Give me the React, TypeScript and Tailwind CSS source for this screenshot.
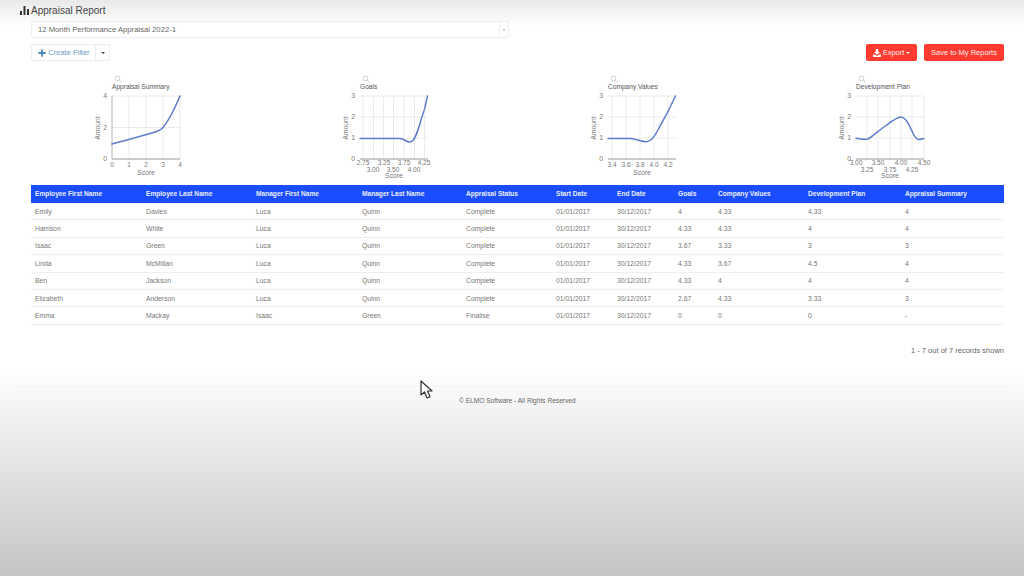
import React from 'react';
import { Plus } from 'lucide-react';

const rows = [
  ['Emily', 'Davies', 'Luca', 'Quinn', 'Complete', '01/01/2017', '30/12/2017', '4', '4.33', '4.33', '4'],
  ['Harrison', 'White', 'Luca', 'Quinn', 'Complete', '01/01/2017', '30/12/2017', '4.33', '4.33', '4', '4'],
  ['Isaac', 'Green', 'Luca', 'Quinn', 'Complete', '01/01/2017', '30/12/2017', '3.67', '3.33', '3', '3'],
  ['Linda', 'McMillan', 'Luca', 'Quinn', 'Complete', '01/01/2017', '30/12/2017', '4.33', '3.67', '4.5', '4'],
  ['Ben', 'Jackson', 'Luca', 'Quinn', 'Complete', '01/01/2017', '30/12/2017', '4.33', '4', '4', '4'],
  ['Elizabeth', 'Anderson', 'Luca', 'Quinn', 'Complete', '01/01/2017', '30/12/2017', '2.67', '4.33', '3.33', '3'],
  ['Emma', 'Mackay', 'Isaac', 'Green', 'Finalise', '01/01/2017', '30/12/2017', '0', '0', '0', '-'],
];

const headers = [
  'Employee First Name', 'Employee Last Name', 'Manager First Name', 'Manager Last Name', 'Appraisal Status',
  'Start Date', 'End Date', 'Goals', 'Company Values', 'Development Plan', 'Appraisal Summary',
];

const colWidths = ['w-[111px]', 'w-[110px]', 'w-[106px]', 'w-[104px]', 'w-[90px]', 'w-[61px]', 'w-[61px]', 'w-[40px]', 'w-[90px]', 'w-[97px]', 'w-[103px]'];

const PLOT_L = 32;
const PLOT_R = 100;
const PLOT_T = 22;
const PLOT_B = 85;

interface ChartProps {
  title: string;
  yTicks: string[];
  xTicks: { label: string; x: number; row?: number }[];
  vGrid: number[];
  line: string;
  scoreY: number;
  tickY: number;
  leftAxis?: boolean;
}

const Chart = ({ title, yTicks, xTicks, vGrid, line, scoreY, tickY, leftAxis }: ChartProps) => {
  const n = yTicks.length - 1;
  return (
    <svg width="130" height="106" viewBox="0 0 130 106" className="shrink-0">
      <g stroke="#cfcfcf" fill="none" strokeWidth="1">
        <circle cx="37.5" cy="4.5" r="2.4" />
        <path d="M39.5 6.5l2 2" />
      </g>
      <text x="32" y="14.5" fontSize="6.6" fill="#555">{title}</text>
      {vGrid.map(x => (
        <line key={x} x1={x} x2={x} y1={PLOT_T} y2={PLOT_B} stroke="#e6e6e6" strokeWidth="0.8" />
      ))}
      {yTicks.map((t, i) => {
        const y = PLOT_B - ((PLOT_B - PLOT_T) * i) / n;
        return (
          <g key={t}>
            <line x1={PLOT_L} x2={PLOT_R} y1={y} y2={y} stroke="#e6e6e6" strokeWidth="0.8" />
            <text x={PLOT_L - 5} y={y + 2} fontSize="6.8" fill="#777" textAnchor="end">{t}</text>
          </g>
        );
      })}
      {leftAxis && <line x1={PLOT_L} x2={PLOT_L} y1={PLOT_T} y2={PLOT_B} stroke="#aaa" strokeWidth="0.9" />}
      <line x1={PLOT_L} x2={PLOT_R} y1={PLOT_B} y2={PLOT_B} stroke="#999" strokeWidth="0.9" />
      {xTicks.map(t => (
        <text key={t.label} x={t.x} y={t.row ? tickY + 6.5 : tickY} fontSize="6.5" fill="#777" textAnchor="middle">{t.label}</text>
      ))}
      <text x="66" y={scoreY} fontSize="6.8" fill="#777" textAnchor="middle">Score</text>
      <text x="20" y="54" fontSize="6.8" fill="#777" textAnchor="middle" transform="rotate(-90 20 54)">Amount</text>
      <path d={line} fill="none" stroke="#5f7ccb" strokeWidth="1.5" strokeLinecap="round" />
    </svg>
  );
};

const charts: ChartProps[] = [
  {
    title: 'Appraisal Summary',
    yTicks: ['0', '2', '4'],
    xTicks: [
      { label: '0', x: 32 }, { label: '1', x: 49 }, { label: '2', x: 66 }, { label: '3', x: 83 }, { label: '4', x: 100 },
    ],
    vGrid: [49, 66, 83, 100],
    line: 'M32 70C45 66.5 60 62.5 72 59C78 57.3 81 56 83 53.5C90 45 95 34 100 22',
    scoreY: 101,
    tickY: 93,
    leftAxis: true,
  },
  {
    title: 'Goals',
    yTicks: ['0', '1', '2', '3'],
    xTicks: [
      { label: '2.75', x: 35 }, { label: '3.00', x: 45, row: 1 }, { label: '3.25', x: 56 }, { label: '3.50', x: 65, row: 1 },
      { label: '3.75', x: 76 }, { label: '4.00', x: 86, row: 1 }, { label: '4.25', x: 96 },
    ],
    vGrid: [35, 45.5, 55.5, 65.5, 76, 86.5, 96.5],
    line: 'M32 64.5H72C76 64.5 78 68 82 68C87 68 90 56 93 46C96 38 98 31 99.5 22',
    scoreY: 103.6,
    tickY: 91,
  },
  {
    title: 'Company Values',
    yTicks: ['0', '1', '2', '3'],
    xTicks: [
      { label: '3.4', x: 36 }, { label: '3.6', x: 50 }, { label: '3.8', x: 64 }, { label: '4.0', x: 78 }, { label: '4.2', x: 92 },
    ],
    vGrid: [36, 50, 64, 78, 92],
    line: 'M32 64.5H54C60 64.5 65 67.7 70 67.7C76 67.7 80 60 84 52C90 42 95 32 99.5 22',
    scoreY: 101,
    tickY: 93,
  },
  {
    title: 'Development Plan',
    yTicks: ['0', '1', '2', '3'],
    xTicks: [
      { label: '3.00', x: 32 }, { label: '3.25', x: 43, row: 1 }, { label: '3.50', x: 54 }, { label: '3.75', x: 66, row: 1 },
      { label: '4.00', x: 77 }, { label: '4.25', x: 88, row: 1 }, { label: '4.50', x: 100 },
    ],
    vGrid: [43, 54, 66, 77, 88, 100],
    line: 'M32 64.3C36 65 40 65.5 44 65C48 63 54 57 62 51.5C68 47 73 43 77 43C81 43 85 50 88 57C90 62 92 65.5 95 65.5C97 65.5 98 64.5 100 64.5',
    scoreY: 103.6,
    tickY: 91,
  },
];

export default function App() {
  return (
    <div
      className="w-[1024px] h-[576px] overflow-hidden text-[#555] bg-[linear-gradient(to_bottom,#e9e9e9_0px,#ffffff_26px,#ffffff_368px,#c5c5c5_576px)]"
      style={{ fontFamily: '"Liberation Sans", Arial, sans-serif' }}
    >
      <div className="flex items-center gap-[2px] pl-[20px] h-[21px]">
        <svg width="9" height="9" viewBox="0 0 9 9" fill="#333">
          <rect x="0" y="5" width="2" height="4" />
          <rect x="3.5" y="0" width="2" height="9" />
          <rect x="7" y="3" width="2" height="6" />
        </svg>
        <span className="text-[10px] text-[#444]">Appraisal Report</span>
      </div>

      <div className="px-[31px] w-[540px]">
        <div className="flex h-[17px] w-[478px] items-center bg-white border border-[#eeeeee] rounded-[2px]">
          <span className="flex-1 pl-[6px] text-[7.7px] text-[#666]">12 Month Performance Appraisal 2022-1</span>
          <span className="flex h-full w-[9px] items-center justify-center border-l border-[#eeeeee]">
            <span className="border-x-[1.5px] border-t-[2px] border-x-transparent border-t-[#999]" />
          </span>
        </div>
      </div>

      <div className="flex justify-between pl-[31px] pr-[20px] pt-[6px] h-[23px]">
        <div className="flex h-[17px] bg-white border border-[#eeeeee] rounded-[2px]">
          <span className="flex w-[64px] items-center justify-center gap-[1px] text-[7.5px] text-[#6d9bc9] border-r border-[#eeeeee]">
            <Plus size={10} strokeWidth={4.5} className="text-[#4f86bd]" />
            Create Filter
          </span>
          <span className="flex w-[13px] items-center justify-center">
            <span className="border-x-[2px] border-t-[2px] border-x-transparent border-t-[#444]" />
          </span>
        </div>
        <div className="flex gap-[7px]">
          <span className="flex h-[17px] w-[51px] items-center justify-center gap-[2px] rounded-[2px] bg-[#ff3b30] text-[7.5px] text-white/90">
            <svg width="8" height="8" viewBox="0 0 8 8" fill="#fff">
              <path d="M2.8 0H5.2V3H7L4 5.8L1 3H2.8Z" />
              <path d="M0 5.6H2L4 7L6 5.6H8V8H0Z" />
            </svg>
            Export
            <span className="border-x-[2px] border-t-[2px] border-x-transparent border-t-white" />
          </span>
          <span className="flex h-[17px] w-[80px] items-center justify-center rounded-[2px] bg-[#ff3b30] text-[7.5px] text-white/90">
            Save to My Reports
          </span>
        </div>
      </div>

      <div className="flex gap-[118px] pl-[80px] pt-[13px]">
        {charts.map(c => <Chart key={c.title} {...c} />)}
      </div>

      <div className="mx-[31px] mt-[5px] w-[973px]">
        <div className="flex h-[18px] items-center bg-[#1a4dff] text-[6.6px] font-bold text-white/90">
          {headers.map((h, i) => (
            <span key={h} className={`${colWidths[i]} pl-[4px] shrink-0`}>{h}</span>
          ))}
        </div>
        {rows.map(r => (
          <div key={r[0]} className="flex h-[17.4px] items-center border-b border-[#eeeeee] pt-[1px] text-[6.8px] text-[#777]">
            {r.map((v, i) => (
              <span key={i} className={`${colWidths[i]} pl-[4px] shrink-0`}>{v}</span>
            ))}
          </div>
        ))}
      </div>

      <div className="mt-[20px] pr-[20px] text-right text-[7.5px] text-[#666]">1 - 7 out of 7 records shown</div>

      <div className="mt-[30px] mx-[16px] border-t border-[#f3f3f3] pt-[9px] pl-[443px] text-[6.6px] text-[#666]">
        © ELMO Software - All Rights Reserved
      </div>

      <svg width="14" height="20" viewBox="0 0 14 20" className="absolute left-[420px] top-[380px]">
        <path d="M1 1V15L4.5 12L7 18L10 16.8L7.5 11H12Z" fill="#fff" stroke="#333" strokeWidth="1.2" strokeLinejoin="round" />
      </svg>
    </div>
  );
}
